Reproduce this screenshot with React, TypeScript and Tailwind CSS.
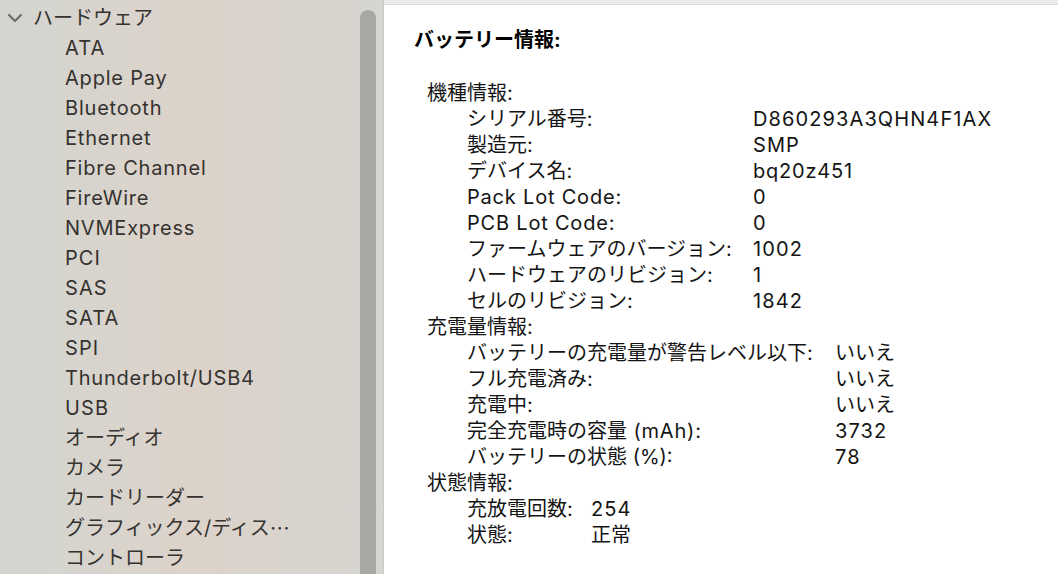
const sidebarItems = [
  "ATA",
  "Apple Pay",
  "Bluetooth",
  "Ethernet",
  "Fibre Channel",
  "FireWire",
  "NVMExpress",
  "PCI",
  "SAS",
  "SATA",
  "SPI",
  "Thunderbolt/USB4",
  "USB",
  "オーディオ",
  "カメラ",
  "カードリーダー",
  "グラフィックス/ディス…",
  "コントローラ",
];

interface Group {
  title: string;
  labelWidth: string;
  rows: [string, string][];
}

const groups: Group[] = [
  {
    title: "機種情報:",
    labelWidth: "w-[286px]",
    rows: [
      ["シリアル番号:", "D860293A3QHN4F1AX"],
      ["製造元:", "SMP"],
      ["デバイス名:", "bq20z451"],
      ["Pack Lot Code:", "0"],
      ["PCB Lot Code:", "0"],
      ["ファームウェアのバージョン:", "1002"],
      ["ハードウェアのリビジョン:", "1"],
      ["セルのリビジョン:", "1842"],
    ],
  },
  {
    title: "充電量情報:",
    labelWidth: "w-[368px]",
    rows: [
      ["バッテリーの充電量が警告レベル以下:", "いいえ"],
      ["フル充電済み:", "いいえ"],
      ["充電中:", "いいえ"],
      ["完全充電時の容量 (mAh):", "3732"],
      ["バッテリーの状態 (%):", "78"],
    ],
  },
  {
    title: "状態情報:",
    labelWidth: "w-[124px]",
    rows: [
      ["充放電回数:", "254"],
      ["状態:", "正常"],
    ],
  },
];

// Latin runs get a little extra tracking so Inter spreads like the system font;
// kana/kanji stay on the 20px grid.
function Txt({ text }: { text: string }) {
  const parts = text.split(/([A-Za-z0-9()%/ ]+|…)/).filter((p) => p !== "");
  return (
    <>
      {parts.map((part, i) =>
        /[A-Z0-9]/.test(part) && /^[A-Z0-9]+$/.test(part.trim()) ? (
          <span key={i} className="tracking-[0.055em]">
            {part}
          </span>
        ) : /[A-Za-z0-9]/.test(part) ? (
          <span key={i} className="tracking-[0.04em]">
            {part}
          </span>
        ) : part === "…" ? (
          <span key={i} className="[font-family:'Noto_Sans_CJK_JP',sans-serif]">
            {part}
          </span>
        ) : (
          <span key={i}>{part}</span>
        )
      )}
    </>
  );
}

function Chevron() {
  return (
    <svg width="16" height="10" viewBox="0 0 16 10" className="shrink-0">
      <path
        d="M2 2 L8 8 L14 2"
        fill="none"
        stroke="#6f6e6b"
        strokeWidth="2.2"
        strokeLinecap="round"
        strokeLinejoin="round"
      />
    </svg>
  );
}

function Sidebar() {
  return (
    <aside className="flex h-full w-[384px] shrink-0 border-r border-[#c9c9c5] bg-gradient-to-r from-[#d3d5d0] via-[#dcd3ca] to-[#d6d5d0]">
      <div className="w-[360px] pt-[3px] text-[20px] text-[#35322f] [font-family:Inter,'Noto_Sans_CJK_JP',sans-serif]">
        <div className="flex h-[30px] items-center gap-[10px] pl-[7px]">
          <Chevron />
          <span>ハードウェア</span>
        </div>
        {sidebarItems.map((item) => (
          <div key={item} className="flex h-[30px] items-center whitespace-nowrap pl-[65px]">
            <Txt text={item} />
          </div>
        ))}
      </div>
      <div className="flex w-[16px] flex-col pt-[10px]">
        <div className="flex-1 rounded-t-full bg-[#a8a7a2]" />
      </div>
    </aside>
  );
}

function InfoPanel() {
  return (
    <main className="flex h-full flex-1 flex-col bg-white text-[20px] text-[#141414] [font-family:Inter,'Noto_Sans_CJK_JP',sans-serif]">
      <div className="h-[5px] shrink-0 border-b border-[#dadada] bg-[#ececec]" />
      <div className="pl-[30px] pt-[22px]">
        <h1 className="text-[20px] font-bold leading-[26px] text-black">バッテリー情報:</h1>
        <div className="mt-[27px] pl-[13px]">
          {groups.map((group) => (
            <div key={group.title}>
              <div className="leading-[26px]">{group.title}</div>
              {group.rows.map(([label, value]) => (
                <div key={label} className="flex pl-[40px] leading-[26px]">
                  <span className={`${group.labelWidth} shrink-0 whitespace-nowrap`}>
                    <Txt text={label} />
                  </span>
                  <span className="whitespace-nowrap">
                    <Txt text={value} />
                  </span>
                </div>
              ))}
            </div>
          ))}
        </div>
      </div>
    </main>
  );
}

export default function App() {
  return (
    <div className="flex h-[574px] w-[1058px] overflow-hidden">
      <Sidebar />
      <InfoPanel />
    </div>
  );
}
